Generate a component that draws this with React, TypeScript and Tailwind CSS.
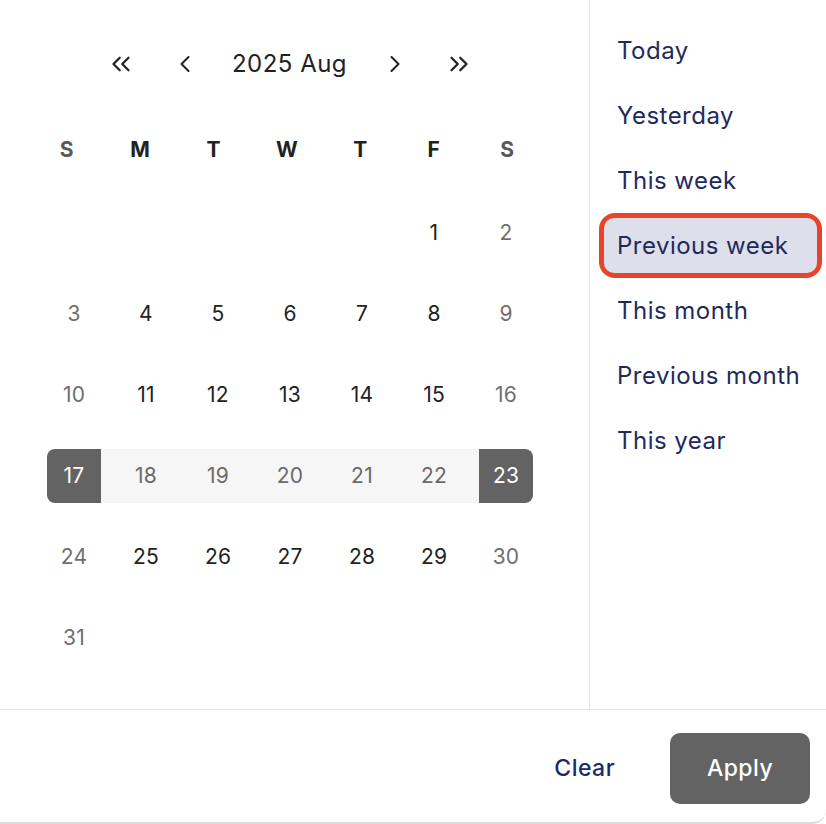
import { ChevronLeft, ChevronRight, ChevronsLeft, ChevronsRight } from "lucide-react"

const weekdays = ["S", "M", "T", "W", "T", "F", "S"]

const weeks: (number | null)[][] = [
  [null, null, null, null, null, 1, 2],
  [3, 4, 5, 6, 7, 8, 9],
  [10, 11, 12, 13, 14, 15, 16],
  [17, 18, 19, 20, 21, 22, 23],
  [24, 25, 26, 27, 28, 29, 30],
  [31, null, null, null, null, null, null],
]

const presets = ["Today", "Yesterday", "This week", "Previous week", "This month", "Previous month", "This year"]

const rangeStart = 17
const rangeEnd = 23

function DayCell({ day, col }: { day: number | null; col: number }) {
  if (day === null) {
    return <div className="h-[54px] w-[72px]" />
  }
  const isStart = day === rangeStart
  const isEnd = day === rangeEnd
  const inRange = day > rangeStart && day < rangeEnd
  const weekend = col === 0 || col === 6

  const leftFill = inRange || isEnd ? "bg-[#f6f6f6]" : ""
  const rightFill = inRange || isStart ? "bg-[#f6f6f6]" : ""

  let box = "text-[#222222]"
  if (isStart) box = "rounded-l-[8px] bg-[#636363] text-white"
  else if (isEnd) box = "rounded-r-[8px] bg-[#636363] text-white"
  else if (inRange) box = "bg-[#f6f6f6] text-[#6a6a6a]"
  else if (weekend) box = "text-[#6f6f6f]"

  return (
    <div className="flex h-[54px] w-[72px]">
      <div className={`h-full w-[9px] ${leftFill}`} />
      <div className={`flex h-full w-[54px] items-center justify-center text-[21px] tracking-[0.01em] ${box}`}>
        {day}
      </div>
      <div className={`h-full w-[9px] ${rightFill}`} />
    </div>
  )
}

export default function App() {
  return (
    <div
      className="flex h-[824px] w-[826px] flex-col overflow-hidden rounded-br-[14px] border-b-2 border-[#dcdce0] bg-white"
      style={{ fontFamily: "Inter, 'Noto Sans', sans-serif" }}
    >
      <div className="flex h-[710px] border-b border-[#e2e2e8]">
        <div className="flex w-[590px] flex-col border-r border-[#e2e2e8]">
          <div className="mt-[44px] flex h-[40px] items-center text-[#222222]">
            <ChevronsLeft className="ml-[106px] h-[30px] w-[30px]" strokeWidth={1.8} />
            <ChevronLeft className="ml-[35px] h-[28px] w-[28px]" strokeWidth={1.8} />
            <span className="ml-[33px] text-[24px] tracking-[0.02em]">2025 Aug</span>
            <ChevronRight className="ml-[34px] h-[28px] w-[28px]" strokeWidth={1.8} />
            <ChevronsRight className="ml-[35px] h-[30px] w-[30px]" strokeWidth={1.8} />
          </div>

          <div className="ml-[30px] mt-[50px] flex">
            {weekdays.map((d, i) => (
              <div
                key={i}
                className={`w-[73.4px] text-center text-[21px] font-bold ${i === 0 || i === 6 ? "text-[#5a5a5a]" : "text-[#222222]"}`}
              >
                {d}
              </div>
            ))}
          </div>

          <div className="ml-[38px] mt-[40px] flex flex-col gap-[27px]">
            {weeks.map((w, r) => (
              <div key={r} className="flex">
                {w.map((d, c) => (
                  <DayCell key={c} day={d} col={c} />
                ))}
              </div>
            ))}
          </div>
        </div>

        <div className="flex flex-1 flex-col pl-[9px] pr-[4px] pt-[18px]">
          {presets.map((p) => {
            const active = p === "Previous week"
            return (
              <div
                key={p}
                className={`flex h-[65px] items-center ${active ? "rounded-[16px] bg-[#e9432a] p-[5px]" : "px-[5px]"}`}
              >
                <div
                  className={`flex h-full w-full items-center pl-[13px] text-[24px] tracking-[0.02em] text-[#1f2a5c] ${active ? "rounded-[10px] bg-[#dde0ea]" : ""}`}
                >
                  {p}
                </div>
              </div>
            )
          })}
        </div>
      </div>

      <div className="flex flex-1 items-center justify-end pr-[16px] pt-[5px]">
        <button className="mr-[55px] text-[23px] font-medium tracking-[0.02em] text-[#1a2a6c]">Clear</button>
        <button className="h-[71px] w-[140px] rounded-[10px] bg-[#636363] text-[23px] font-medium tracking-[0.02em] text-white">
          Apply
        </button>
      </div>
    </div>
  )
}
